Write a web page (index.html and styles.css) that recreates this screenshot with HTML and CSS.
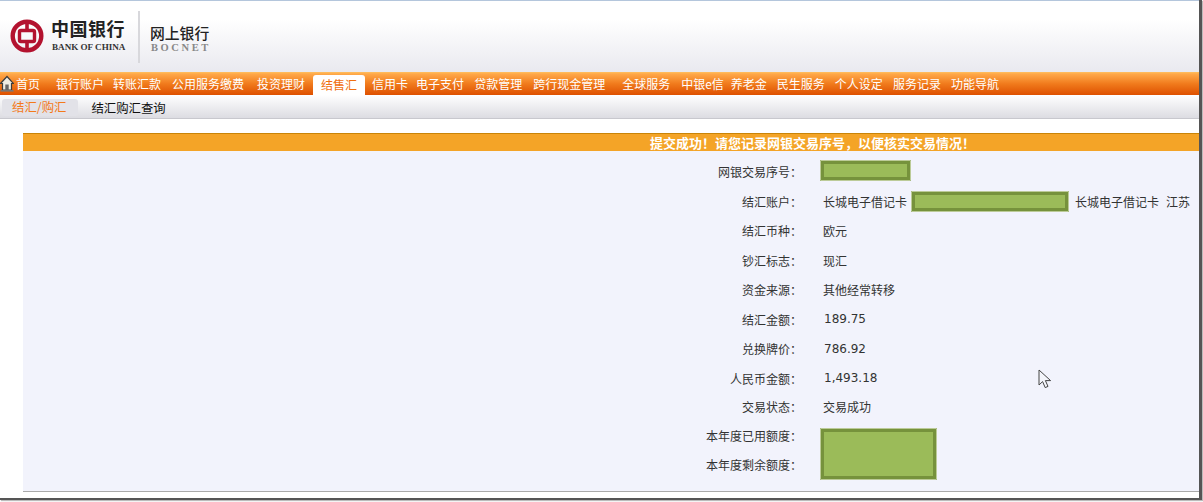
FILE: index.html
```html
<!DOCTYPE html>
<html lang="zh-CN">
<head>
    <meta charset="UTF-8">
    <title>网上银行</title>
    <link rel="stylesheet" href="styles.css">
</head>
<body>
    <div class="page">
        <div class="header">
            <svg class="logo-mark" width="34" height="36" viewBox="0 0 34 36">
                <circle cx="17" cy="18" r="14.3" fill="none" stroke="#b3122f" stroke-width="4.4"/>
                <rect x="9.5" y="12.5" width="15" height="11" rx="1.5" fill="none" stroke="#b3122f" stroke-width="3.4"/>
                <rect x="15.2" y="3" width="3.6" height="9" fill="#b3122f"/>
                <rect x="15.2" y="24" width="3.6" height="9" fill="#b3122f"/>
            </svg>
            <div class="logo-text">
                <div class="logo-cn">中国银行</div>
                <div class="logo-en">BANK OF CHINA</div>
            </div>
            <div class="divider"></div>
            <div class="brand">
                <div class="brand-cn">网上银行</div>
                <div class="brand-en">BOCNET</div>
            </div>
        </div>

        <div class="nav">
            <svg class="home-icon" width="14" height="17" viewBox="0 0 14 17">
                <path d="M0.5 8.5 L7 1.5 L13.5 8.5 L11.5 8.5 L11.5 15 L2.5 15 L2.5 8.5 Z" fill="#efece2" stroke="#3c3c3c" stroke-width="1.2"/>
                <rect x="5.3" y="9.5" width="3.4" height="5.5" fill="#666"/>
                <rect x="0.5" y="15" width="13" height="1.6" fill="#777"/>
            </svg>
            <a class="nav-item home-item">首页</a>
            <a class="nav-item">银行账户</a>
            <a class="nav-item less-1">转账汇款</a>
            <a class="nav-item more-1">公用服务缴费</a>
            <a class="nav-item more-3">投资理财</a>
            <a class="nav-item active">结售汇</a>
            <a class="nav-item">信用卡</a>
            <a class="nav-item less-2">电子支付</a>
            <a class="nav-item">贷款管理</a>
            <a class="nav-item more-1">跨行现金管理</a>
            <a class="nav-item more-7">全球服务</a>
            <a class="nav-item more-1">中银e信</a>
            <a class="nav-item less-3">养老金</a>
            <a class="nav-item">民生服务</a>
            <a class="nav-item">个人设定</a>
            <a class="nav-item">服务记录</a>
            <a class="nav-item">功能导航</a>
        </div>

        <div class="subnav">
            <a class="sub-tab current">结汇/购汇</a>
            <a class="sub-tab">结汇购汇查询</a>
        </div>

        <div class="content">
            <div class="banner">提交成功！请您记录网银交易序号，以便核实交易情况！</div>
            <div class="panel">
                <div class="label">网银交易序号：</div>
                <div class="value"><span class="mask mask-short"></span></div>

                <div class="label">结汇账户：</div>
                <div class="value">长城电子借记卡<span class="mask mask-long"></span>长城电子借记卡<span class="region">江苏</span></div>

                <div class="label">结汇币种：</div>
                <div class="value">欧元</div>

                <div class="label">钞汇标志：</div>
                <div class="value">现汇</div>

                <div class="label">资金来源：</div>
                <div class="value">其他经常转移</div>

                <div class="label">结汇金额：</div>
                <div class="value number">189.75</div>

                <div class="label">兑换牌价：</div>
                <div class="value number">786.92</div>

                <div class="label">人民币金额：</div>
                <div class="value number">1,493.18</div>

                <div class="label">交易状态：</div>
                <div class="value">交易成功</div>

                <div class="label">本年度已用额度：</div>
                <div class="value span-two"><span class="mask mask-big"></span></div>

                <div class="label">本年度剩余额度：</div>
            </div>
        </div>

        <svg class="cursor" width="15" height="20" viewBox="0 0 15 20">
            <path d="M1 1 L1 16 L4.6 12.6 L7.2 18.6 L10 17.4 L7.4 11.6 L12.6 11.6 Z" fill="#f4f5fb" stroke="#444" stroke-width="1"/>
        </svg>
    </div>
</body>
</html>
```

FILE: styles.css
```css
html, body {
    margin: 0;
    background-color: #fff;
}

body {
    font-family: "Noto Sans CJK SC", "Liberation Sans", sans-serif;
    font-size: 12px;
    color: #333;
    height: 502px;
    overflow: hidden;
}

.page {
    position: relative;
    width: 1199px;
    height: 498px;
    border-right: 3px solid #555;
    border-bottom: 2px solid #555;
    box-shadow: 1px 1px 1px #bbb;
    background-color: #fff;
}

.header {
    display: flex;
    align-items: flex-start;
    height: 71px;
    border-top: 1px solid #b4c6dc;
    background: linear-gradient(#fff 0, #fff 18px, #e9e9ef 71px);
}

.logo-mark {
    margin: 17px 0 0 10px;
}

.logo-text {
    margin: 14px 0 0 7px;
    width: 87px;
}

.logo-cn {
    font-size: 18px;
    font-weight: 700;
    line-height: 26px;
    letter-spacing: 0.5px;
    color: #222;
}

.logo-en {
    font-family: "Liberation Serif", serif;
    font-size: 9.1px;
    font-weight: 700;
    line-height: 12px;
    padding-left: 1px;
    color: #333;
}

.divider {
    width: 2px;
    height: 52px;
    margin-top: 10px;
    background-color: #d8d8dc;
}

.brand {
    margin: 22px 0 0 10px;
}

.brand-cn {
    font-size: 14.8px;
    font-weight: 500;
    line-height: 19px;
    color: #222;
}

.brand-en {
    font-family: "Liberation Serif", serif;
    font-size: 10.5px;
    font-weight: 700;
    line-height: 12px;
    letter-spacing: 2.6px;
    padding-left: 1px;
    color: #888;
}

.nav {
    display: flex;
    align-items: center;
    gap: 10px;
    height: 23px;
    background: linear-gradient(#ffc060 0, #ffa848 2px, #f07a1c 12px, #de5000 23px);
}

.home-icon {
    flex: none;
    margin-right: -8px;
}

.nav-item {
    color: #fff;
    line-height: 23px;
    white-space: nowrap;
}

.home-item {
    margin-right: 6px;
}

.less-3 {
    margin-left: -3px;
}

.less-2 {
    margin-left: -2px;
}

.less-1 {
    margin-left: -1px;
}

.more-1 {
    margin-left: 1px;
}

.more-3 {
    margin-left: 3px;
}

.more-7 {
    margin-left: 7px;
}

.active {
    margin: 3px -3px 0 -2px;
    padding: 0 8px;
    line-height: 20px;
    color: #f07010;
    background-color: #fff;
    border-radius: 3px 3px 0 0;
}

.subnav {
    display: flex;
    align-items: center;
    gap: 13px;
    box-sizing: border-box;
    height: 24px;
    padding: 2px 0 0 2px;
    border-bottom: 1px solid #c8c8ce;
    background: linear-gradient(#fff, #dcdce2);
}

.sub-tab {
    color: #111;
    font-size: 12.4px;
}

.current {
    padding: 0 12px 0 10px;
    line-height: 17px;
    color: #f47a1a;
    background-color: #e2e2e8;
    border-radius: 3px;
}

.content {
    margin: 14px 0 0 23px;
}

.banner {
    height: 17px;
    padding-left: 627px;
    border-top: 1px solid #c98408;
    background-color: #f4a427;
    color: #fff;
    font-size: 13px;
    font-weight: 700;
    line-height: 17px;
    white-space: nowrap;
}

.panel {
    display: grid;
    grid-template-columns: 779px 1fr;
    grid-template-rows: repeat(8, 29.5px) 27px 30px 29.5px;
    column-gap: 21px;
    padding: 6px 0 11.5px;
    background-color: #f2f3fc;
    border-bottom: 1px solid #aaa;
}

.label {
    display: flex;
    align-items: center;
    justify-content: flex-end;
    white-space: nowrap;
}

.value {
    display: flex;
    align-items: center;
    white-space: nowrap;
}

.number {
    font-family: "DejaVu Sans", sans-serif;
    font-size: 12px;
    padding-left: 1px;
}

.region {
    margin-left: 7px;
}

.span-two {
    grid-row: span 2;
}

.mask {
    display: block;
    box-sizing: border-box;
    background-color: #9bbb59;
    border: 4px solid #76923c;
    outline: 1px solid #bccb98;
    outline-offset: -1px;
    border-radius: 1px;
}

.mask-short {
    width: 91px;
    height: 21px;
    margin: -2px 0 0 -3px;
}

.mask-long {
    width: 158px;
    height: 21px;
    margin: 0 6px 0 4px;
}

.mask-big {
    width: 117px;
    height: 52px;
    margin: 8px 0 0 -3px;
}

.cursor {
    position: absolute;
    left: 1038px;
    top: 369px;
}
```
